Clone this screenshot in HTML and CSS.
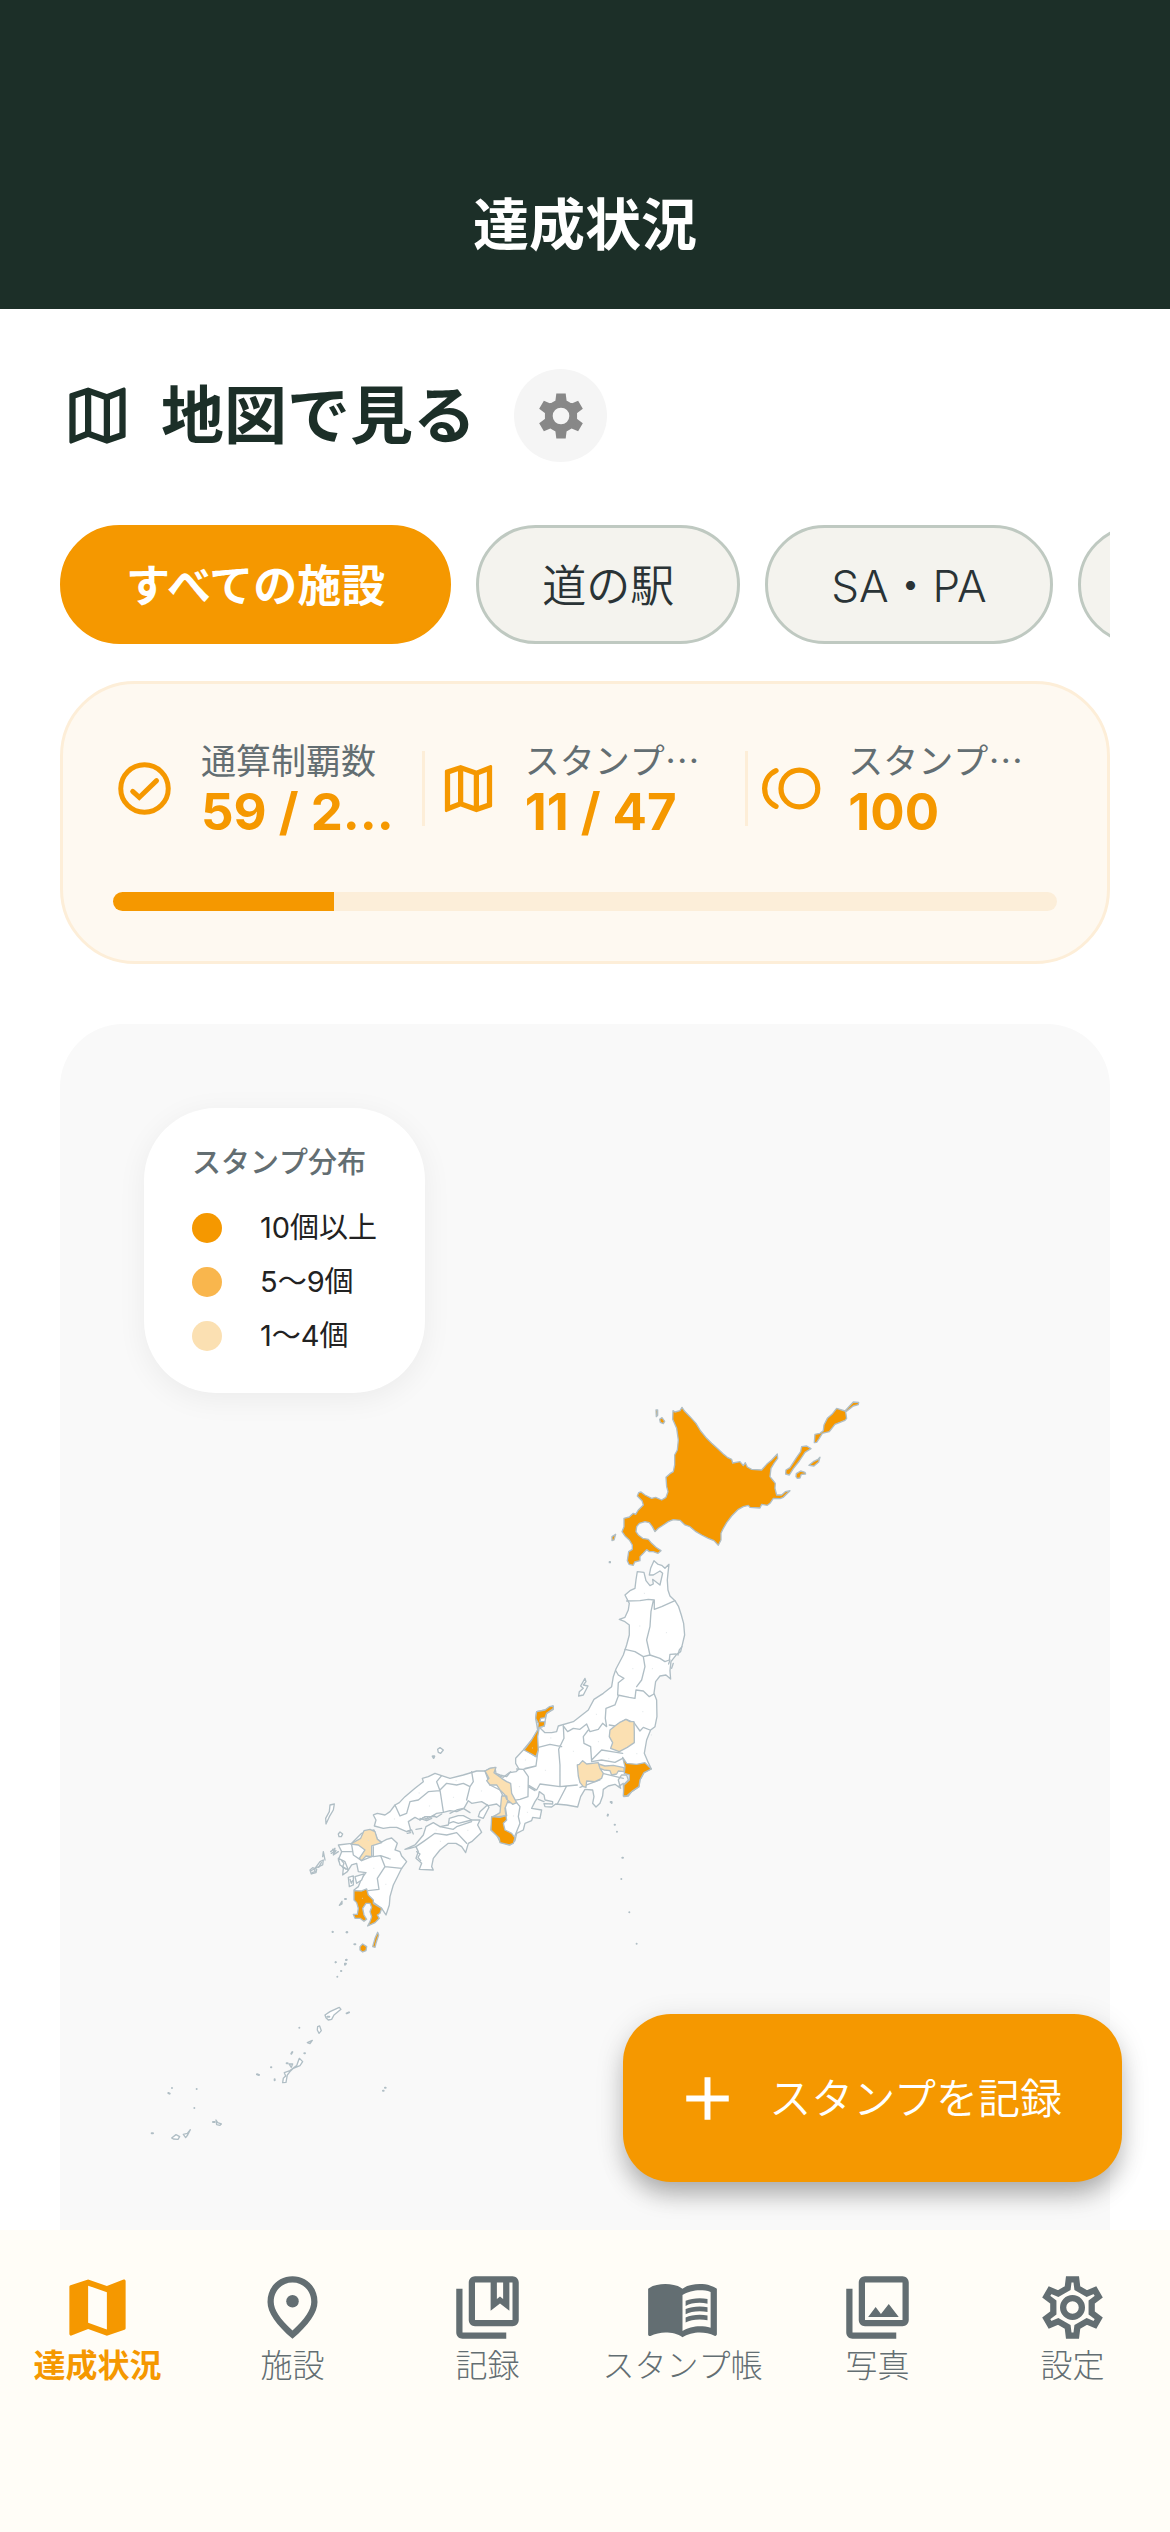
FILE: index.html
```html
<!DOCTYPE html>
<html lang="ja">
<head>
    <meta charset="UTF-8">
    <meta name="viewport" content="width=device-width, initial-scale=1.0">
    <title>達成状況</title>
    <link rel="stylesheet" href="styles.css">
</head>
<body>
    <!-- 共通アイコン -->
    <svg class="defs" aria-hidden="true">
        <symbol id="icon-map" viewBox="0 0 24 24">
            <path d="M20.5 3l-.16.03L15 5.1 9 3 3.36 4.9c-.21.07-.36.25-.36.48V20.5c0 .28.22.5.5.5l.16-.03L9 18.9l6 2.1 5.64-1.9c.21-.07.36-.25.36-.48V3.5c0-.28-.22-.5-.5-.5zM10 5.47l4 1.4v11.66l-4-1.4V5.47zm-5 .99l3-1.01v11.7l-3 1.16V6.46zm14 11.08l-3 1.01V6.86l3-1.16v11.84z"/>
        </symbol>
        <symbol id="icon-gear" viewBox="0 0 24 24">
            <path stroke="currentColor" stroke-width="2" d="M10.8 3L13.2 3 13.55 5.8 16.59 7.56 19.19 6.46 20.39 8.54 18.14 10.24 18.14 13.76 20.39 15.46 19.19 17.54 16.59 16.44 13.55 18.2 13.2 21 10.8 21 10.45 18.2 7.41 16.44 4.81 17.54 3.61 15.46 5.86 13.76 5.86 10.24 3.61 8.54 4.81 6.46 7.41 7.56 10.45 5.8z"/>
        </symbol>
    </svg>

    <div class="app">
        <header class="app-bar">
            <h1>達成状況</h1>
        </header>

        <main class="content">
            <div class="section-head">
                <svg class="icon icon-lg"><use href="#icon-map"/></svg>
                <h2>地図で見る</h2>
                <button class="gear-button" type="button" aria-label="表示設定">
                    <svg class="icon icon-sm" viewBox="0 0 24 24">
                        <use href="#icon-gear"/>
                        <circle cx="12" cy="12" r="3.7" fill="#f5f5f5"/>
                    </svg>
                </button>
            </div>

            <div class="chips">
                <button class="chip active" type="button">すべての施設</button>
                <button class="chip" type="button">道の駅</button>
                <button class="chip" type="button">SA・PA</button>
                <button class="chip" type="button" aria-label="その他"></button>
            </div>

            <section class="stats">
                <div class="stats-row">
                    <div class="stat">
                        <svg class="icon icon-md" viewBox="0 0 24 24">
                            <g fill="none" stroke="currentColor" stroke-width="1.9" stroke-linecap="round">
                                <circle cx="12" cy="12" r="9.05"/>
                                <path d="M7.5 13.1L10 15.4 16.6 9"/>
                            </g>
                        </svg>
                        <div class="stat-text">
                            <span class="stat-label">通算制覇数</span>
                            <span class="stat-value">59 / 2...</span>
                        </div>
                    </div>
                    <div class="divider"></div>
                    <div class="stat">
                        <svg class="icon icon-md"><use href="#icon-map"/></svg>
                        <div class="stat-text">
                            <span class="stat-label">スタンプ…</span>
                            <span class="stat-value">11 / 47</span>
                        </div>
                    </div>
                    <div class="divider"></div>
                    <div class="stat">
                        <svg class="icon icon-md" viewBox="0 0 24 24">
                            <g fill="none" stroke="currentColor" stroke-width="2" stroke-linecap="round">
                                <circle cx="15" cy="12" r="7"/>
                                <path d="M6.1 5.2A7.5 7.5 0 0 0 6.1 18.8"/>
                            </g>
                        </svg>
                        <div class="stat-text">
                            <span class="stat-label">スタンプ…</span>
                            <span class="stat-value">100</span>
                        </div>
                    </div>
                </div>
                <div class="progress">
                    <div class="progress-fill" style="width: 23.4%"></div>
                </div>
            </section>

            <section class="map-card">
                <div class="legend">
                    <h3>スタンプ分布</h3>
                    <ul>
                        <li><span class="dot dot-high"></span>10個以上</li>
                        <li><span class="dot dot-mid"></span>5〜9個</li>
                        <li><span class="dot dot-low"></span>1〜4個</li>
                    </ul>
                </div>

                <svg class="japan" viewBox="60 1024 1050 1206" role="img" aria-label="都道府県別スタンプ分布">
                    <!-- 北海道 -->
                    <g class="high" transform="translate(590 1380) scale(.3333)">
                        <path d="M248 118L249 92 255 96 270 92 276 82 284 94 300 110 318 130 332 153 350 175 365 190 385 208 400 222 412 232 425 238 428 249 450 245 460 257 466 248 472 261 485 268 515 270 530 253 545 240 562 222 563 235 552 250 543 265 540 290 548 300 556 310 555 325 560 345 575 345 586 335 600 332 580 352 570 356 550 355 540 370 532 376 515 373 510 384 480 382 475 376 460 380 445 388 425 408 410 428 400 445 393 460 393 480 385 496 372 482 355 475 335 465 318 455 300 440 285 435 270 421 250 419 235 425 220 435 205 445 195 455 187 440 178 428 165 425 148 430 140 440 138 455 145 465 158 475 175 478 185 490 198 502 213 512 204 520 190 515 178 515 170 509 160 520 150 530 150 542 134 546 130 556 117 553 112 542 116 515 127 508 127 495 118 480 105 468 96 455 102 440 102 415 118 411 130 400 137 403 145 390 160 375 156 362 142 348 146 338 153 336 165 345 185 355 197 352 215 360 228 352 234 335 230 320 228 292 240 281 250 275 254 255 254 225 262 210 265 180 260 145z"/>
                        <path d="M635 200L650 198 663 206 645 217 628 243 610 266 598 285 587 282 588 270 600 263 620 232 632 215zM657 256L670 245 684 238 690 232 686 246 672 258zM618 290L619 281 632 273 645 277 647 282 634 283 630 294 622 295zM673 188L675 163 690 160 700 152 702 135 712 115 726 103 740 85 765 93 790 66 806 67 805 74 790 78 767 96 770 115 765 121 735 133 718 155 697 160 688 175 680 187zM209 118L216 113 224 124 220 131 211 127zM198 90L203 90 203 106 199 110zM66 470L77 463 72 480 66 482zM58 545h3v3h-3z"/>
                    </g>

                    <g transform="translate(290 1670) scale(.3333)">
                        <!-- 本州 -->
                        <path d="M1078 -285L1082 -305 1092 -328 1103 -318 1115 -314 1125 -305 1137 -317 1134 -290 1132 -270 1134 -240 1140 -222 1155 -208 1166 -190 1174 -165 1181 -140 1184 -105 1178 -80 1172 -55 1160 -47 1143 -25 1140 2 1142 27 1128 15 1110 18 1097 35 1092 70 1100 90 1101 140 1095 170 1082 180 1070 210 1063 250 1075 278 1084 297 1062 308 1050 330 1047 350 1025 365 1015 378 1002 380 1000 345 1015 330 1010 315 995 315 985 330 992 355 975 343 955 348 940 358 938 378 930 400 918 411 908 400 912 380 908 360 885 358 872 380 863 411 830 405 797 402 785 411 765 410 762 401 788 402 788 395 765 390 762 375 748 365 745 380 735 395 725 415 755 420 750 445 728 442 725 452 705 460 700 480 680 490 675 512 660 525 630 515 620 495 603 480 608 440 632 430 632 412 620 402 595 407 575 395 545 400 535 392 522 415 500 425 480 422 460 427 440 430 425 440 405 440 390 450 375 442 355 455 362 480 350 485 320 472 300 472 280 475 253 468 258 450 250 435 262 430 285 435 300 425 315 405 328 398 345 380 375 355 400 335 397 325 415 320 435 310 455 317 480 325 520 315 560 303 585 303 600 295 615 292 618 310 630 315 650 320 660 308 678 305 687 297 677 280 677 265 700 240 725 210 743 180 737 145 740 125 765 120 788 108 790 118 770 130 765 155 763 168 748 172 765 188 785 188 800 185 805 168 850 155 895 120 912 88 940 70 965 50 970 20 978 -3 1000 -45 1010 -75 1018 -105 1018 -135 1005 -145 988 -152 1005 -158 1015 -180 1018 -200 1005 -225 1020 -238 1035 -245 1038 -270 1042 -295 1062 -293 1068 -268 1080 -253 1090 -258 1088 -272 1110 -255 1118 -290 1110 -297 1090 -285z"/>
                        <!-- 県境 -->
                        <g class="border">
                            <path d="M1010 -207L1050 -208 1075 -212 1093 -210 1093 -182 1115 -190 1155 -208M1090 -208L1083 -175 1080 -130 1070 -90 1080 -45M1005 -62L1035 -55 1060 -40 1080 -45 1110 -35 1125 -25 1138 -30 1140 -47 1158 -48M1060 -40L1065 -10 1055 30 1040 50M978 3L985 15 1002 25 985 38 983 75 1018 82 1035 85 1038 60 1060 63 1078 80 1092 72M985 78L975 105 948 115 946 145 950 170M958 165L975 168 1008 148 1032 158 1050 183 1060 172 1080 180M820 168L833 185 850 175 870 178 890 162 900 185 925 178 938 160 950 170M895 180L880 200 882 220 902 230 905 275 935 270 975 277 998 265M905 270L935 240 965 245 998 250"/>
                            <path d="M820 168L822 205 806 238 810 285 810 350M745 232L780 223 815 230M702 238L738 260M745 235L738 288 700 298 680 297M700 298L715 320 714 380 690 388 668 392M738 288L705 295M715 345L740 360 750 342 810 350 830 348M802 402L830 348 862 345M870 352L890 345 930 330M715 350L735 362M655 398L680 398 690 410 685 440 690 460 675 497M650 437L645 405M455 317L440 335 450 362 415 365 385 390 360 395 350 430 330 438 315 405M450 360L460 425M450 360L470 340 500 345 520 340 540 350 530 390M540 350L550 335 545 305M585 303L600 345 630 360 640 380 635 405M938 310L1000 325"/>
                        </g>

                        <!-- 四国・九州 -->
                        <path d="M345 538L375 525 400 495 408 470 430 458 450 470 475 465 478 445 505 437 520 437 545 450 570 450 563 465 575 487 545 515 535 520 527 548 515 530 498 520 475 520 450 540 430 565 425 590 430 600 388 598 395 580 378 565 385 545 378 530 360 535z"/>
                        <path d="M252 480L262 508 275 516 290 508 305 504 322 520 315 540 330 545 335 558 350 575 335 595 325 615 310 645 300 680 298 705 288 735 275 715 240 690 192 660 205 650 215 625 228 608 205 605 200 580 185 585 172 605 158 615 160 595 145 570 155 545 145 525 185 520 215 490z"/>
                        <path d="M565 440L570 425 592 405 597 412 580 445zM175 622L190 618 190 645 178 650zM195 620L222 612 215 630 200 640zM145 565L150 585 175 600 165 575zM872 48L885 25 888 35 880 45 894 48 880 75 866 78 868 65 880 55zM443 238L450 233 460 240 452 250 445 247zM120 405L133 402 130 420 118 440 108 462 107 445 118 425zM145 492L150 486 158 492 154 500 147 500z"/>
                        <g class="border">
                            <path d="M378 530L400 515 435 490 470 495 500 488 530 520M450 470L490 478 500 470 545 455M476 460L490 455 505 460 545 450M250 530L250 560 272 557 285 590 335 595M285 590L262 625 267 658 235 662M215 572L250 558M272 557L300 567M185 525L190 555 215 572M155 545L185 545"/>
                            <path d="M60 600L68 593 80 598 78 608 64 612zM75 595L90 575 100 570 98 585zM98 560L100 545 105 570M122 545L135 535 130 555 145 545M350 485L365 480 370 492M378 478L395 475M408 448L415 440 435 440M480 430L500 420 520 415 540 428M620 315L640 322 662 305M745 388L762 395M1000 340L985 350M390 445L410 452 425 445"/>
                            <path d="M62 603L72 597 76 605 66 608M86 592L94 578M124 550L138 542 134 548 128 538M155 572L162 580 158 590 168 598M180 628L184 640 188 632M390 450L400 443 412 447 430 436 440 442 455 432M352 490L362 488 358 482M380 545L390 552 384 562 392 572M1176 -70L1168 -60 1164 -45M1150 -20L1145 -5M1140 -30L1136 -18"/>
                        </g>

                        <!-- 1〜4個 -->
                        <g class="low">
                            <path d="M960 180L975 168 988 158 1008 148 1020 155 1032 155 1033 185 1033 218 1012 232 988 245 962 235 968 218 958 200zM862 285L868 283 878 272 890 282 925 278 930 295 940 310 935 325 915 335 890 333 888 352 880 350 870 338 865 318zM926 282L945 288 970 286 1002 293 1003 305 985 303 980 312 965 315 960 302 942 300 930 295z"/>
                            <path d="M585 303L600 295 618 292 612 308 635 325 650 335 662 340 665 370 680 398 668 403 650 388 645 375 630 360 620 345 600 345 590 332 597 325zM635 378L650 378 653 395 645 415 648 437 608 442 630 428zM182 522L212 505 222 482 240 478 255 485 262 508 275 518 245 528 245 560 228 558 215 572 208 565 225 540 205 525z"/>
                        </g>

                        <!-- 10個以上 -->
                        <g class="high">
                            <path d="M998 262L1010 280 1040 283 1065 278 1084 297 1062 308 1050 330 1047 350 1025 365 1010 378 1000 378 1002 345 1018 330 1018 315 1003 310 1005 290zM740 125L765 120 778 110 790 108 790 116 770 130 765 143 752 145 750 155 765 155 763 168 748 172 743 200 745 240 738 260 725 252 702 240 725 210 743 180 745 160 737 145z"/>
                            <path d="M605 440L630 442 648 437 650 450 640 460 645 480 665 490 675 503 670 520 658 525 630 518 628 505 603 480zM192 662L215 663 230 657 235 675 250 690 250 700 275 715 270 730 262 735 268 745 255 758 233 768 240 755 245 740 240 725 245 712 240 700 228 700 218 715 222 735 230 748 222 754 210 745 195 745 190 733 202 733 205 715 200 698 192 690zM210 830L218 822 230 830 228 842 218 846 210 840zM263 787L266 795 258 820 255 832 248 830 255 805zM148 706L156 694 156 702z"/>
                        </g>

                        <!-- 離島 -->
                        <path class="islet" d="M428 259h5l-2 5zM165 687h3M170 787h1M193 823h3M168 870h1M165 881h3M137 877h0M128 785h0M962 396h3v3M954 434l-1 3M974 464h1M981 485h0M997 563h2M994 627h0M1040 821h0M1018 727h0"/>
                        <path class="mark" d="M919 133h1M1058 125h1M1084 195h1M925 215h1M956 266h1M850 244h1M782 204h1M766 301h1M727 234h1M706 270h1M688 350h1M712 427h1M670 438h1M574 363h1M490 382h1M418 408h1M387 369h1M498 332h1M313 447h1M451 514h1M438 480h1M533 481h1M235 511h1M251 595h1M298 566h1M287 643h1M183 544h1M217 685h1M1063 -230h1M1049 -132h1M1129 -112h1M1028 -4h1M1087 -4h1M1040 251h1"/>
                    </g>

                    <!-- 南西諸島 -->
                    <g transform="translate(130 1920) scale(.3333)">
                        <path d="M585 285L600 275 628 262 633 268 612 285 605 298 595 300 588 293zM563 320L569 318 574 332 567 340 562 330zM532 368L547 361 540 371zM477 432L488 432 484 442zM508 415L518 425 510 437 490 445 480 455 472 465 468 487 458 488 460 475 467 468 463 458 480 452 500 437zM258 600L263 608 274 612 270 616 260 614zM125 654L138 644 149 650 144 658 130 657zM160 643L172 640 181 629 173 645 167 653z"/>
                        <path class="islet" d="M608 36h0M650 37h2M617 127h0M645 131v3M649 119h1M633 153h1M622 170h0M650 280l7-3M508 323h0M484 401l3-5M523 400h2M470 430h3M423 442h1M434 481v-3M381 463l6 2M115 519l4 2M126 504h0M200 507h0M193 564h0M249 606h5M65 640h4M759 512h2M765 503h2M592 290h6"/>
                    </g>
                </svg>
            </section>

            <button class="fab" type="button">
                <svg class="icon icon-lg" viewBox="0 0 24 24"><path d="M5.2 12h13.6M12 5.2v13.6" stroke="currentColor" stroke-width="1.9"/></svg>
                <span>スタンプを記録</span>
            </button>
        </main>

        <nav class="tabs">
            <a href="#" class="tab active">
                <svg class="icon icon-lg" viewBox="0 0 24 24"><path d="M20.5 3l-.16.03L15 5.1 9 3 3.36 4.9c-.21.07-.36.25-.36.48V20.5c0 .28.22.5.5.5l.16-.03L9 18.9l6 2.1 5.64-1.9c.21-.07.36-.25.36-.48V3.5c0-.28-.22-.5-.5-.5zM15 19l-6-2.11V5l6 2.11V19z"/></svg>
                <span>達成状況</span>
            </a>
            <a href="#" class="tab">
                <svg class="icon icon-lg" viewBox="0 0 24 24"><path d="M12 2C7.8 2 4 5.22 4 10.2c0 3.32 2.67 7.25 8 11.8 5.33-4.55 8-8.48 8-11.8C20 5.22 16.2 2 12 2zm0 17.35c-4.05-3.7-6-6.8-6-9.15C6 6.57 8.65 4 12 4s6 2.57 6 6.2c0 2.35-1.95 5.45-6 9.15z"/><circle cx="12" cy="10" r="2"/></svg>
                <span>施設</span>
            </a>
            <a href="#" class="tab">
                <svg class="icon icon-lg" viewBox="0 0 24 24"><path d="M4 6H2v14c0 1.1.9 2 2 2h14v-2H4V6zm16-4H8c-1.1 0-2 .9-2 2v12c0 1.1.9 2 2 2h12c1.1 0 2-.9 2-2V4c0-1.1-.9-2-2-2zm-3 2v5.25l-1-.75-1 .75V4h2zm3 12H8V4h5v9l3-2.25L19 13V4h1v12z"/></svg>
                <span>記録</span>
            </a>
            <a href="#" class="tab">
                <svg class="icon icon-lg" viewBox="0 0 24 24"><path d="M21 5c-1.11-.35-2.33-.5-3.5-.5-1.95 0-4.05.4-5.5 1.5-1.45-1.1-3.55-1.5-5.5-1.5S2.45 4.9 1 6v14.65c0 .25.25.5.5.5.1 0 .15-.05.25-.05C3.1 20.45 5.05 20 6.5 20c1.95 0 4.05.4 5.5 1.5 1.35-.85 3.8-1.5 5.5-1.5 1.65 0 3.35.3 4.75 1.05.1.05.15.05.25.05.25 0 .5-.25.5-.5V6c-.6-.45-1.25-.75-2-1zm0 13.5c-1.1-.35-2.3-.5-3.5-.5-1.7 0-4.15.65-5.5 1.5V8c1.35-.85 3.8-1.5 5.5-1.5 1.2 0 2.4.15 3.5.5v11.5z"/><path d="M17.5 10.5c.88 0 1.73.09 2.5.26V9.24c-.79-.15-1.64-.24-2.5-.24-1.7 0-3.24.29-4.5.83v1.66c1.13-.64 2.7-.99 4.5-.99zM13 12.49v1.66c1.13-.64 2.7-.99 4.5-.99.88 0 1.73.09 2.5.26V11.9c-.79-.15-1.64-.24-2.5-.24-1.7 0-3.24.3-4.5.83zM17.5 14.33c-1.7 0-3.24.29-4.5.83v1.66c1.13-.64 2.7-.99 4.5-.99.88 0 1.73.09 2.5.26v-1.52c-.79-.16-1.64-.24-2.5-.24z"/></svg>
                <span>スタンプ帳</span>
            </a>
            <a href="#" class="tab">
                <svg class="icon icon-lg" viewBox="0 0 24 24"><path d="M4 6H2v14c0 1.1.9 2 2 2h14v-2H4V6zm16-4H8c-1.1 0-2 .9-2 2v12c0 1.1.9 2 2 2h12c1.1 0 2-.9 2-2V4c0-1.1-.9-2-2-2zm0 14H8V4h12v12zM9 15l2.4-3.2 1.7 2.3 2.5-3.2L18.8 15z"/></svg>
                <span>写真</span>
            </a>
            <a href="#" class="tab">
                <svg class="icon icon-lg" viewBox="0 0 24 24"><g fill="none"><use href="#icon-gear"/><circle cx="12" cy="12" r="3" stroke="currentColor" stroke-width="2"/></g></svg>
                <span>設定</span>
            </a>
        </nav>
    </div>
</body>
</html>
```
FILE: styles.css
```css
* {
    box-sizing: border-box;
}

body {
    margin: 0;
    background: #fff;
    color: #1c2f28;
    font-family: Inter, 'Noto Sans CJK JP', sans-serif;
    font-kerning: none;
}

h1, h2, h3, ul {
    margin: 0;
    padding: 0;
}

button {
    border: none;
    font-family: inherit;
    cursor: pointer;
}

.defs {
    display: none;
}

.app {
    display: flex;
    flex-direction: column;
    height: 100vh;
}

/* アイコン */
.icon {
    flex: none;
    display: block;
    fill: currentColor;
}

.icon-sm {
    width: 54px;
    height: 54px;
}

.icon-md {
    width: 63px;
    height: 63px;
}

.icon-lg {
    width: 75px;
    height: 75px;
}

/* ヘッダー */
.app-bar {
    flex: none;
    padding: 141px 0 0;
    background: #1c2f28;
    color: #fff;
    text-align: center;
}

.app-bar h1 {
    font-size: 56px;
    font-weight: 700;
    line-height: 168px;
}

.content {
    flex: 1;
    min-height: 0;
    position: relative;
    overflow: hidden;
    padding: 60px 60px 0;
}

.section-head {
    display: flex;
    align-items: center;
    margin-bottom: 63px;
}

.section-head h2 {
    margin: 0 38px 0 26px;
    font-size: 63px;
    font-weight: 700;
    line-height: 93px;
}

.gear-button {
    display: flex;
    align-items: center;
    justify-content: center;
    width: 93px;
    height: 93px;
    padding: 0;
    border-radius: 50%;
    background: #f5f5f5;
    color: #888;
}

/* 施設フィルター */
.chips {
    display: flex;
    gap: 25px;
    margin-bottom: 37px;
    overflow: hidden;
}

.chip {
    flex: none;
    min-width: 260px;
    height: 119px;
    padding: 0 63px 4px;
    border: 3px solid #bfc9c1;
    border-radius: 60px;
    background: #f4f3ee;
    color: #2a3336;
    font-size: 44px;
    font-weight: 350;
}

.chip.active {
    border-color: #f59800;
    background: #f59800;
    color: #fff;
    font-weight: 700;
}

/* 集計カード */
.stats {
    margin-bottom: 60px;
    padding: 50px;
    border: 3px solid #fdeed8;
    border-radius: 75px;
    background: #fef9f1;
}

.stats-row {
    display: flex;
    align-items: center;
    height: 109px;
    margin-bottom: 49px;
}

.stat {
    flex: 1;
    min-width: 0;
    display: flex;
    align-items: center;
    gap: 25px;
    color: #f59800;
}

.stat-text {
    display: flex;
    flex-direction: column;
    padding-bottom: 4px;
    white-space: nowrap;
}

.stat-label {
    color: #636e72;
    font-family: 'Noto Sans CJK JP', sans-serif;
    font-size: 35px;
    font-weight: 400;
    line-height: 50px;
}

.stat-value {
    font-size: 51px;
    font-weight: 700;
    line-height: 56px;
}

.divider {
    width: 3px;
    height: 75px;
    margin: 0 12px;
    background: #fdeed8;
}

.progress {
    height: 19px;
    border-radius: 10px;
    background: #fceed9;
    overflow: hidden;
}

.progress-fill {
    height: 100%;
    background: #f59800;
}

/* 地図 */
.map-card {
    position: relative;
    padding-bottom: 90px;
    border-radius: 63px;
    background: #f9f9f9;
}

.japan {
    display: block;
    width: 100%;
    fill: #fff;
    stroke: #b0bec5;
    stroke-width: 4;
    stroke-linejoin: round;
    stroke-linecap: round;
}

.japan .high {
    fill: #f59800;
}

.japan .low {
    fill: #fbe0b2;
}

.japan .border {
    fill: none;
}

.japan .islet {
    fill: none;
    stroke-width: 6;
}

.japan .mark {
    stroke: #d5dcdf;
    stroke-width: 2;
}

.legend {
    position: absolute;
    top: 84px;
    left: 84px;
    padding: 30px 48px;
    border-radius: 72px;
    background: #fff;
    box-shadow: 0 6px 30px rgba(0, 0, 0, 0.06);
}

.legend h3 {
    margin-bottom: 13px;
    color: #636e72;
    font-size: 29px;
    font-weight: 500;
    line-height: 50px;
}

.legend ul {
    list-style: none;
}

.legend li {
    display: flex;
    align-items: center;
    color: #222;
    font-size: 29px;
    line-height: 54px;
}

.dot {
    width: 30px;
    height: 30px;
    margin-right: 38px;
    border-radius: 50%;
}

.dot-high {
    background: #f59800;
}

.dot-mid {
    background: #f9b64d;
}

.dot-low {
    background: #fbe0b2;
}

/* スタンプ記録ボタン */
.fab {
    position: absolute;
    right: 48px;
    bottom: 48px;
    display: flex;
    align-items: center;
    gap: 24px;
    height: 168px;
    padding: 0 60px 0 47px;
    border-radius: 48px;
    background: #f59800;
    color: #fff;
    font-size: 42px;
    font-weight: 350;
    box-shadow: 0 16px 24px -4px rgba(0, 0, 0, 0.25), 0 6px 30px rgba(0, 0, 0, 0.12);
}

.fab span {
    padding-bottom: 6px;
}

/* タブバー */
.tabs {
    flex: none;
    display: flex;
    padding: 40px 0 146px;
    background: #fffdf7;
}

.tab {
    flex: 1;
    min-width: 0;
    display: flex;
    flex-direction: column;
    align-items: center;
    color: #636e72;
    font-size: 32px;
    font-weight: 300;
    line-height: 41px;
    text-decoration: none;
    white-space: nowrap;
}

.tab.active {
    color: #f59800;
    font-weight: 700;
}
```
